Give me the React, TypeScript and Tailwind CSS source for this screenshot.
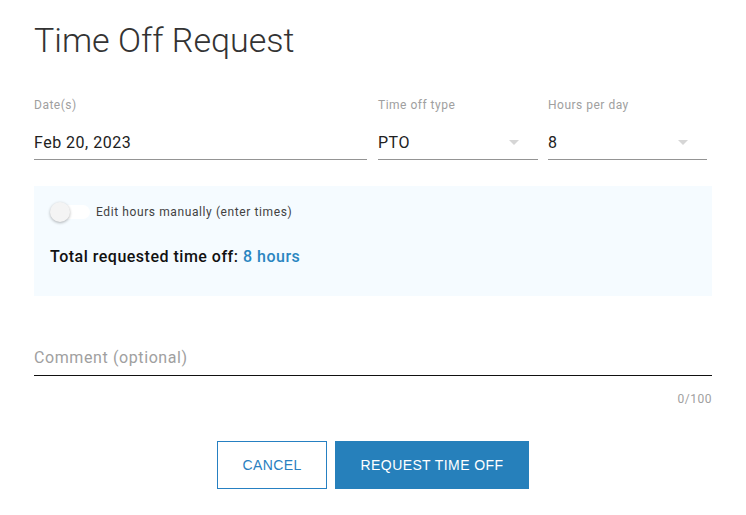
import React from 'react';

const Caret: React.FC = () => (
  <svg width="10" height="5" viewBox="0 0 10 5" className="text-[#d6d6d6]">
    <path d="M0 0 L5 5 L10 0 Z" fill="currentColor" />
  </svg>
);

const App: React.FC = () => {
  return (
    <div className="min-h-screen bg-white px-[34px] pt-[20px] font-['Roboto',sans-serif] text-[#212121]">
      <h1 className="text-[34px] font-light leading-[40px] text-[#333]">Time Off Request</h1>

      <div className="mt-[38px] flex">
        <div className="w-[333px]">
          <div className="text-[12px] leading-[14px] tracking-[0.5px] text-[#a0a0a0]">Date(s)</div>
          <div className="mt-[14px] flex h-[34px] items-center border-b border-[#949494] text-[16px] tracking-[0.5px]">
            Feb 20, 2023
          </div>
        </div>
        <div className="ml-[11px] w-[160px]">
          <div className="text-[12px] leading-[14px] tracking-[0.5px] text-[#a0a0a0]">Time off type</div>
          <div className="mt-[14px] flex h-[34px] items-center justify-between border-b border-[#949494] pr-[19px] text-[16px] tracking-[0.5px]">
            <span>PTO</span>
            <Caret />
          </div>
        </div>
        <div className="ml-[10px] w-[159px]">
          <div className="text-[12px] leading-[14px] tracking-[0.5px] text-[#a0a0a0]">Hours per day</div>
          <div className="mt-[14px] flex h-[34px] items-center justify-between border-b border-[#949494] pr-[19px] text-[16px] tracking-[0.5px]">
            <span>8</span>
            <Caret />
          </div>
        </div>
      </div>

      <div className="mt-[26px] h-[110px] bg-[#f5fbff] px-[16px] pt-[18px]">
        <div className="flex h-[16px] items-center">
          <div className="relative h-[14px] w-[40px] rounded-full bg-white">
            <div className="absolute left-0 top-1/2 h-[20px] w-[20px] -translate-y-1/2 rounded-full bg-[#f4f4f4] shadow-[0_1px_3px_rgba(0,0,0,0.3)]" />
          </div>
          <span className="ml-[6px] text-[12px] leading-[16px] tracking-[0.6px] text-[#424242]">Edit hours manually (enter times)</span>
        </div>
        <div className="mt-[25px] text-[16px] font-medium leading-[24px] tracking-[0.5px] text-[#111]">
          Total requested time off: <span className="text-[#2a86c1]">8 hours</span>
        </div>
      </div>

      <div className="mt-[47px] flex h-[33px] items-center border-b border-[#111] pb-[3px] text-[16px] tracking-[0.6px] text-[#a0a0a0]">
        Comment (optional)
      </div>
      <div className="mt-[16px] text-right text-[12px] leading-[14px] tracking-[0.5px] text-[#a0a0a0]">0/100</div>

      <div className="mt-[35px] flex justify-center gap-[8px] font-['Liberation_Sans',sans-serif] text-[14px] tracking-[0.4px]">
        <button className="h-[48px] w-[110px] border border-[#2680c2] bg-white text-[#2a80c0]">CANCEL</button>
        <button className="h-[48px] w-[194px] bg-[#2680bb] text-white">REQUEST TIME OFF</button>
      </div>
    </div>
  );
};

export default App;
